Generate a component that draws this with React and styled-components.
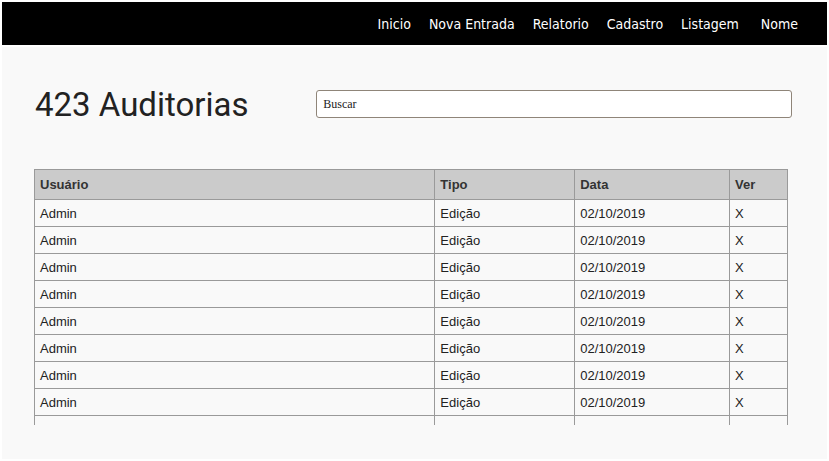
import React from "react";
import styled, { createGlobalStyle } from "styled-components";

const Global = createGlobalStyle`
  html, body { margin: 0; padding: 0; background: #fff; }
  body { font-family: "Liberation Sans", Arial, sans-serif; }
`;

const Frame = styled.div`
  padding: 2px;
  height: 461px;
  box-sizing: border-box;
  display: flex;
  flex-direction: column;
  gap: 2px;
  background: #fff;
`;

const NavBar = styled.nav`
  height: 43px;
  background: #000;
  display: flex;
  justify-content: flex-end;
  align-items: center;
  padding: 1px 29px 0 0;
  box-sizing: border-box;
  gap: 18px;
  flex-shrink: 0;
`;

const NavLink = styled.a`
  color: #fff;
  font-family: "Liberation Sans Narrow", "DejaVu Sans Condensed", "Liberation Sans", sans-serif;
  font-size: 14px;
  text-decoration: none;
  margin-left: ${(p) => p.$extra || 0}px;
`;

const Main = styled.main`
  flex: 1;
  background: #f9f9f9;
  padding: 36px 35px 0 32px;
  overflow: hidden;
`;

const HeaderRow = styled.div`
  display: flex;
  align-items: center;
  height: 42px;
`;

const Title = styled.h1`
  margin: 0;
  width: 283px;
  font-family: Roboto, "Liberation Sans", sans-serif;
  font-weight: 400;
  font-size: 33px;
  color: #222;
  padding-left: 1px;
  box-sizing: border-box;
`;

const Search = styled.input`
  width: 477px;
  height: 28px;
  box-sizing: border-box;
  border: 1px solid #8f8579;
  border-radius: 3px;
  background: #fff;
  padding: 0 6px;
  font-family: "Liberation Serif", "Times New Roman", serif;
  font-size: 12px;
  color: #222;
  outline: none;
  &::placeholder { color: #222; opacity: 1; }
`;

const TableWrap = styled.div`
  margin-top: 44px;
  height: 256px;
  overflow: hidden;
  width: 754px;
`;

const Table = styled.table`
  width: 754px;
  border-collapse: collapse;
  font-family: "Liberation Sans", Arial, sans-serif;
  font-size: 13px;
  color: #222;
`;

const Th = styled.th`
  background: #cbcbcb;
  border: 1px solid #9a9a9a;
  height: 30px;
  padding: 0 5px;
  text-align: left;
  font-weight: 700;
  color: #333;
  width: ${(p) => p.$w}px;
  box-sizing: border-box;
`;

const Td = styled.td`
  border: 1px solid #9a9a9a;
  height: 27px;
  padding: 0 5px;
  box-sizing: border-box;
`;

const rows = Array.from({ length: 9 }, (_, i) => i);

export default function App() {
  return (
    <>
      <Global />
      <Frame>
        <NavBar>
          <NavLink href="#">Inicio</NavLink>
          <NavLink href="#">Nova Entrada</NavLink>
          <NavLink href="#">Relatorio</NavLink>
          <NavLink href="#">Cadastro</NavLink>
          <NavLink href="#">Listagem</NavLink>
          <NavLink href="#" $extra={4}>Nome</NavLink>
        </NavBar>
        <Main>
          <HeaderRow>
            <Title>423 Auditorias</Title>
            <Search placeholder="Buscar" />
          </HeaderRow>
          <TableWrap>
            <Table>
              <thead>
                <tr>
                  <Th $w={401}>Usuário</Th>
                  <Th $w={140}>Tipo</Th>
                  <Th $w={155}>Data</Th>
                  <Th $w={58}>Ver</Th>
                </tr>
              </thead>
              <tbody>
                {rows.map((i) => (
                  <tr key={i}>
                    <Td>{i < 8 ? "Admin" : ""}</Td>
                    <Td>{i < 8 ? "Edição" : ""}</Td>
                    <Td>{i < 8 ? "02/10/2019" : ""}</Td>
                    <Td>{i < 8 ? "X" : ""}</Td>
                  </tr>
                ))}
              </tbody>
            </Table>
          </TableWrap>
        </Main>
      </Frame>
    </>
  );
}
